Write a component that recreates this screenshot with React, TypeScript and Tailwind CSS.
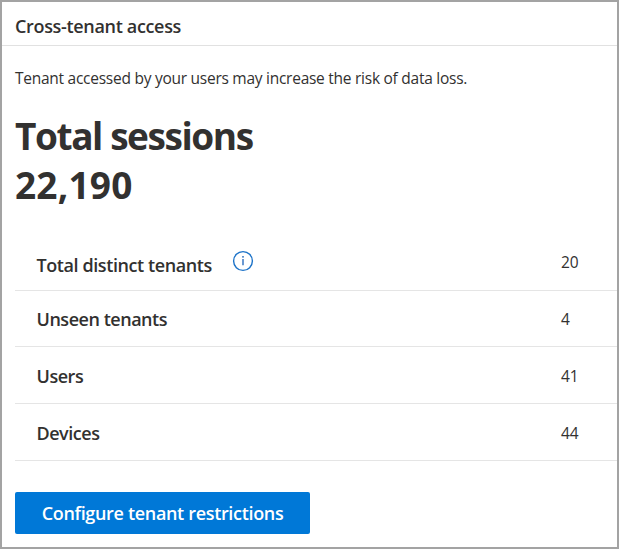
import React from "react";

const rows = [
  { label: "Unseen tenants", value: "4", height: "h-14", offset: "pt-px" },
  { label: "Users", value: "41", height: "h-[57px]", offset: "pt-0.5" },
  { label: "Devices", value: "44", height: "h-[57px]", offset: "pt-0.5" },
];

function InfoIcon() {
  return (
    <svg className="mb-[3px] ml-5 size-[22px]" viewBox="0 0 22 22" fill="none" aria-label="Info">
      <circle cx="11" cy="11" r="9.4" stroke="#1b72c8" strokeWidth="1.4" />
      <path d="M11 9v6.2" stroke="#1b62b8" strokeWidth="1.3" />
      <circle cx="11" cy="6.8" r="0.9" fill="#1b62b8" />
    </svg>
  );
}

export default function App() {
  return (
    <div className="h-[549px] w-[619px] border-2 border-[#a3a3a3] bg-white font-['Open_Sans','Noto_Sans',sans-serif] text-[#323130]">
      <header className="flex h-11 items-center border-b border-[#e1e1e1] pt-1.5 pl-[13px]">
        <h2 className="text-[18px] font-semibold tracking-[-0.33px]">Cross-tenant access</h2>
      </header>
      <main className="pl-[13px]">
        <p className="pt-[21px] text-[15.5px] leading-[23px] tracking-[-0.26px]">
          Tenant accessed by your users may increase the risk of data loss.
        </p>
        <h1 className="pt-[21px] text-[37px] leading-[49px] font-bold">
          <span className="block tracking-[-1.42px]">Total sessions</span>
          <span className="block tracking-[0.2px]">22,190</span>
        </h1>
        <div className="mt-[25px] flex h-[57px] items-center border-b border-[#e5e5e5] pl-[21.5px]">
          <div className="flex w-[524.5px] items-center">
            <span className="pt-[7px] text-[18px] font-semibold tracking-[-0.41px]">Total distinct tenants</span>
            <InfoIcon />
          </div>
          <span className="pt-0.5 text-[15.5px] tracking-[-0.2px]">20</span>
        </div>
        {rows.map((row) => (
          <div key={row.label} className={`flex items-center border-b border-[#e5e5e5] pt-0.5 pl-[21.5px] ${row.height}`}>
            <span className="w-[524.5px] text-[18px] font-semibold tracking-[-0.47px]">{row.label}</span>
            <span className={`text-[15.5px] tracking-[-0.2px] ${row.offset}`}>{row.value}</span>
          </div>
        ))}
        <button className="mt-[31px] flex h-[42px] w-[295px] items-center justify-center rounded-[2px] bg-[#0078d7] pt-px text-[18px] font-semibold tracking-[-0.33px] text-white">
          Configure tenant restrictions
        </button>
      </main>
    </div>
  );
}
